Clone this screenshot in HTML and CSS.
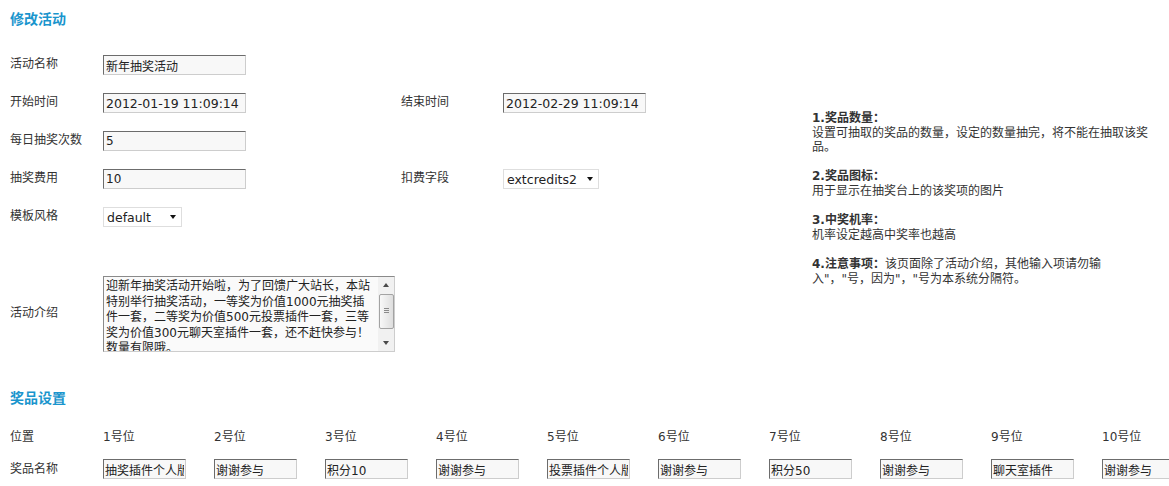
FILE: index.html
```html
<!DOCTYPE html>
<html lang="zh-CN">
<head>
<meta charset="utf-8">
<title>修改活动</title>
<link rel="stylesheet" href="styles.css">
</head>
<body>
<h2 class="title">修改活动</h2>
<div class="main">
  <div class="form">
    <div class="row">
      <span class="lbl">活动名称</span>
      <div><input class="txt w143" value="新年抽奖活动"></div>
    </div>
    <div class="row">
      <span class="lbl">开始时间</span>
      <div><input class="txt w143 date" value="2012-01-19 11:09:14"></div>
      <span class="lbl">结束时间</span>
      <div><input class="txt w143 date" value="2012-02-29 11:09:14"></div>
    </div>
    <div class="row">
      <span class="lbl">每日抽奖次数</span>
      <div><input class="txt w143" value="5"></div>
    </div>
    <div class="row">
      <span class="lbl">抽奖费用</span>
      <div><input class="txt w143" value="10"></div>
      <span class="lbl">扣费字段</span>
      <div><span class="sel-wrap w96"><select class="sel"><option>extcredits2</option></select></span></div>
    </div>
    <div class="row">
      <span class="lbl">模板风格</span>
      <div><span class="sel-wrap w79"><select class="sel"><option>default</option></select></span></div>
    </div>
    <div class="row intro">
      <span class="lbl">活动介绍</span>
      <div class="span3">
        <div class="area-wrap">
          <textarea class="area">迎新年抽奖活动开始啦，为了回馈广大站长，本站特别举行抽奖活动，一等奖为价值1000元抽奖插件一套，二等奖为价值500元投票插件一套，三等奖为价值300元聊天室插件一套，还不赶快参与！数量有限哦。</textarea>
          <div class="vscroll" aria-hidden="true">
            <span class="sb-btn up"></span>
            <span class="sb-thumb"></span>
            <span class="sb-track"></span>
            <span class="sb-btn down"></span>
          </div>
        </div>
      </div>
    </div>
  </div>
  <div class="help">
    <p><b>1.奖品数量：</b><br>设置可抽取的奖品的数量，设定的数量抽完，将不能在抽取该奖品。</p>
    <p><b>2.奖品图标：</b><br>用于显示在抽奖台上的该奖项的图片</p>
    <p><b>3.中奖机率：</b><br>机率设定越高中奖率也越高</p>
    <p><b>4.注意事项：</b>该页面除了活动介绍，其他输入项请勿输<span class="nw">入"，"号，因为"，</span>"号为本系统分隔符。</p>
  </div>
</div>

<h2 class="title sub">奖品设置</h2>
<div class="prize pos">
  <span>位置</span>
  <span>1号位</span>
  <span>2号位</span>
  <span>3号位</span>
  <span>4号位</span>
  <span>5号位</span>
  <span>6号位</span>
  <span>7号位</span>
  <span>8号位</span>
  <span>9号位</span>
  <span>10号位</span>
</div>
<div class="prize names">
  <span>奖品名称</span>
  <input class="txt pz" value="抽奖插件个人版">
  <input class="txt pz" value="谢谢参与">
  <input class="txt pz" value="积分10">
  <input class="txt pz" value="谢谢参与">
  <input class="txt pz" value="投票插件个人版">
  <input class="txt pz" value="谢谢参与">
  <input class="txt pz" value="积分50">
  <input class="txt pz" value="谢谢参与">
  <input class="txt pz" value="聊天室插件">
  <input class="txt pz" value="谢谢参与">
</div>
</body>
</html>
```

FILE: styles.css
```css
html {
  overflow: hidden;
}

body {
  margin: 0;
  font: 12px "DejaVu Sans", "Noto Sans CJK SC", sans-serif;
  color: #333;
  background: #fff;
}

.title {
  margin: 0;
  padding: 9px 0 0 10px;
  font-size: 14px;
  line-height: 20px;
  font-weight: bold;
  color: #1a95cd;
}

.title.sub {
  padding-top: 0;
  margin-top: 36px;
}

.main {
  display: flex;
  margin-top: 26px;
}

.form {
  flex: none;
  width: 812px;
  padding-left: 10px;
  box-sizing: border-box;
}

.row {
  display: grid;
  grid-template-columns: 93px 298px 102px 1fr;
  align-items: center;
  height: 20px;
  margin-bottom: 18px;
}

.row.intro {
  height: 76px;
  margin-top: 49px;
  margin-bottom: 0;
}

.span3 {
  grid-column: 2 / 5;
}

.lbl {
  white-space: nowrap;
  line-height: 19px;
  margin-bottom: 1px;
}

.txt {
  display: block;
  box-sizing: border-box;
  height: 20px;
  margin: 0;
  padding: 0 2px;
  border: 1px solid;
  border-color: #6c6c6c #cdcdcd #cdcdcd #6c6c6c;
  border-radius: 0;
  background: #f8f8f8;
  font: 12px "DejaVu Sans", "Noto Sans CJK SC", sans-serif;
  color: #222;
  outline: none;
}

.txt.date {
  font-size: 12.5px;
}

.w143 {
  width: 143px;
}

.sel-wrap {
  position: relative;
  display: block;
}

.w79 {
  width: 79px;
}

.w96 {
  width: 96px;
}

.sel {
  -webkit-appearance: none;
  appearance: none;
  display: block;
  box-sizing: border-box;
  width: 100%;
  height: 20px;
  margin: 0;
  padding: 0 14px 0 3px;
  border: 1px solid #dedede;
  border-radius: 0;
  background: #fff;
  font: 12.5px "DejaVu Sans", "Noto Sans CJK SC", sans-serif;
  color: #222;
  outline: none;
}

.sel-wrap::after {
  content: "";
  position: absolute;
  right: 6px;
  top: 8px;
  border-left: 3.5px solid transparent;
  border-right: 3.5px solid transparent;
  border-top: 4px solid #111;
  pointer-events: none;
}

.area-wrap {
  position: relative;
  width: 292px;
  height: 76px;
}

.area {
  display: block;
  box-sizing: border-box;
  width: 292px;
  height: 76px;
  margin: 0;
  padding: 2px 19px 2px 2px;
  border: 1px solid;
  border-color: #8a8a8a #cdcdcd #cdcdcd #8a8a8a;
  background: #fafafa;
  font: 12px "DejaVu Sans", "Noto Sans CJK SC", sans-serif;
  line-height: 15.5px;
  color: #222;
  resize: none;
  overflow: hidden;
  outline: none;
}

.vscroll {
  position: absolute;
  top: 1px;
  right: 1px;
  bottom: 1px;
  width: 16px;
  display: flex;
  flex-direction: column;
  background: #f1f1f1;
}

.sb-btn {
  position: relative;
  flex: none;
  height: 17px;
}

.sb-btn::after {
  content: "";
  position: absolute;
  left: 5px;
  top: 7px;
  border-left: 3px solid transparent;
  border-right: 3px solid transparent;
}

.sb-btn.up::after {
  top: 6px;
  border-bottom: 4px solid #4a4a4a;
}

.sb-btn.down::after {
  border-top: 4px solid #4a4a4a;
}

.sb-thumb {
  position: relative;
  flex: none;
  height: 35px;
  box-sizing: border-box;
  margin: 0 0 0 1px;
  width: 15px;
  border: 1px solid #a3a3a3;
  border-radius: 2px;
  background: linear-gradient(to right, #f8f8f8, #dedede);
}

.sb-thumb::after {
  content: "";
  position: absolute;
  left: 4px;
  top: 13px;
  width: 5px;
  height: 5px;
  background: repeating-linear-gradient(to bottom, #8a8a8a 0 1px, transparent 1px 2px);
}

.sb-track {
  flex: 1;
}

.help {
  flex: none;
  width: 345px;
  padding-top: 56px;
  line-height: 14.6px;
}

.help p {
  margin: 0 0 14.6px;
}

.help b {
  font-weight: bold;
}

.nw {
  white-space: nowrap;
}

.prize {
  display: grid;
  grid-template-columns: 93px repeat(10, 111px);
  align-items: center;
  height: 20px;
  padding-left: 10px;
  line-height: 19px;
}

.prize.pos {
  margin-top: 19px;
}

.prize.names {
  margin-top: 12px;
}

.pz {
  width: 83px;
  padding: 0 1px;
}
```
